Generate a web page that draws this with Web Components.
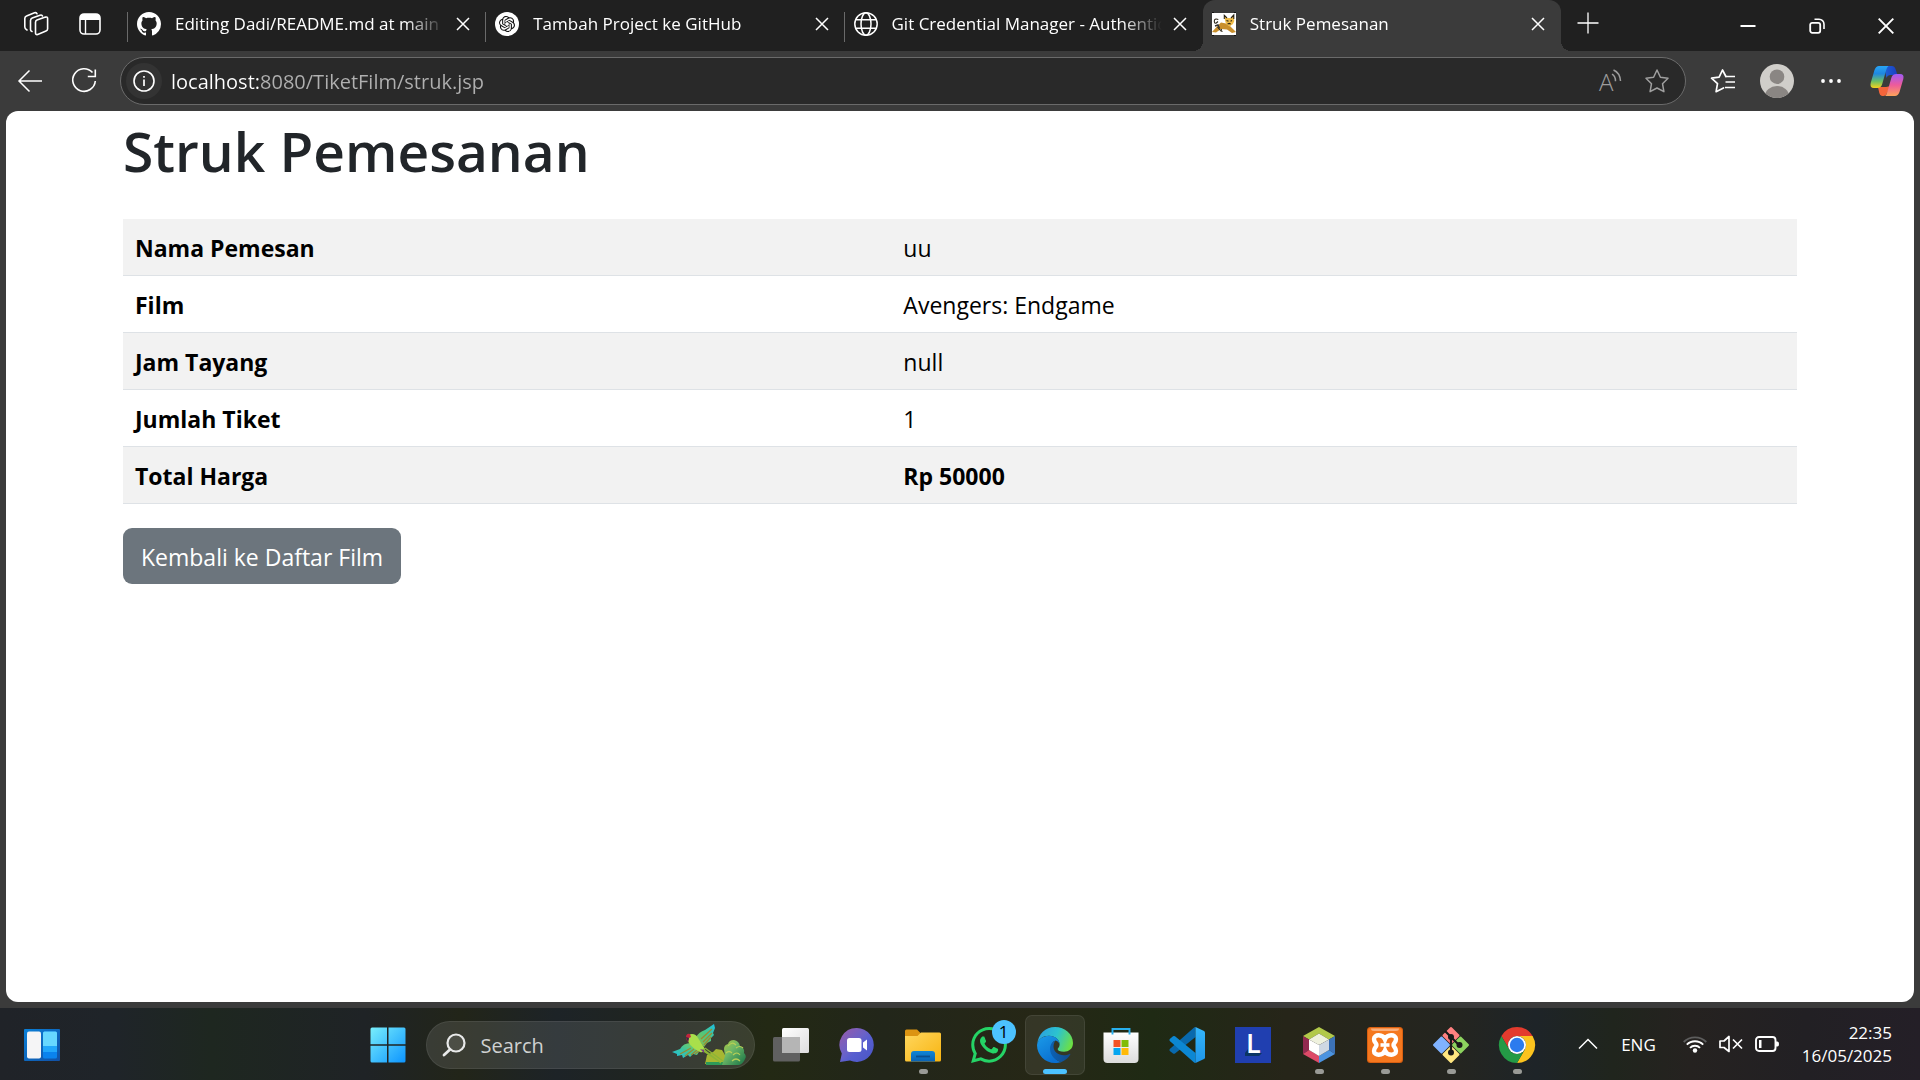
<!DOCTYPE html>
<html lang="id">
<head>
<meta charset="utf-8">
<title>Struk Pemesanan</title>
<style>
  html, body { margin: 0; height: 100%; }
  body { font-family: "Open Sans", "Noto Sans", sans-serif; background: #3b3b3b; overflow: hidden; }
</style>
</head>
<body>
<desktop-screen>
  <tab-strip slot="window">
    <browser-tab icon="github">Editing Dadi/README.md at main</browser-tab>
    <browser-tab icon="openai">Tambah Project ke GitHub</browser-tab>
    <browser-tab icon="globe">Git Credential Manager - Authentication</browser-tab>
    <browser-tab icon="tomcat" active>Struk Pemesanan</browser-tab>
  </tab-strip>
  <address-bar slot="window"></address-bar>
  <receipt-page slot="window"></receipt-page>
  <task-bar slot="taskbar"></task-bar>
</desktop-screen>

<script>
const ICONS = {
  workspaces: [26, 26, `<g fill="none" stroke="#fff" stroke-width="1.6" stroke-linejoin="round" stroke-linecap="round"><path d="M12.5 11.2Q12.6 9.5 14 9l8.500-2.900Q24.600 5.600 24.600 7.500v10.500Q24.500 19.500 23 20l-8.300 3.500Q12.500 24 12.500 22Z"/><path d="M9 20.500Q7.500 20 7.500 18.500V9.500Q7.600 7.700 9.200 7.100L17 4.200Q19 3.600 19.500 5"/><path d="M4 19Q1.800 17.800 1.800 16V7.500Q1.800 5.500 3.500 4.900L11.500 1.800Q13.500 1.300 14 2.800"/></g>`],
  sidebar: [22, 22, `<rect x="1" y="1" width="20" height="20" rx="4" fill="none" stroke="#fff" stroke-width="1.600"/><path d="M1 7V5a4 4 0 0 1 4-4h12a4 4 0 0 1 4 4v2z" fill="#fff"/><path d="M6.500 6v15" stroke="#fff" stroke-width="1.400"/>`],
  github: [16, 16, `<path fill="#fff" d="M8 0C3.58 0 0 3.58 0 8c0 3.540 2.290 6.530 5.470 7.590.4.07.55-.17.55-.38 0-.19-.01-.82-.01-1.490-2.010.37-2.530-.49-2.690-.94-.09-.23-.48-.94-.82-1.130-.28-.15-.68-.52-.01-.53.63-.01 1.080.58 1.230.82.72 1.210 1.870.87 2.330.66.07-.52.28-.87.51-1.070-1.780-.2-3.640-.89-3.640-3.950 0-.87.31-1.590.82-2.150-.08-.2-.36-1.020.08-2.120 0 0 .67-.21 2.200.82.64-.18 1.320-.27 2-.27s1.360.09 2 .27c1.530-1.040 2.200-.82 2.200-.82.44 1.100.16 1.920.08 2.120.51.56.82 1.270.82 2.150 0 3.070-1.870 3.750-3.650 3.950.29.25.54.73.54 1.480 0 1.070-.01 1.930-.01 2.200 0 .21.15.46.55.38A8.010 8.010 0 0016 8c0-4.420-3.580-8-8-8z"/>`],
  openai: [24, 24, `<circle cx="12" cy="12" r="12" fill="#fff"/><path transform="translate(4 4) scale(.667)" fill="#111" d="M22.2819 9.8211a5.9847 5.9847 0 0 0-.5157-4.9108 6.0462 6.0462 0 0 0-6.5098-2.9A6.0651 6.0651 0 0 0 4.9807 4.1818a5.9847 5.9847 0 0 0-3.9977 2.9 6.0462 6.0462 0 0 0 .7427 7.0966 5.98 5.98 0 0 0 .511 4.9107 6.051 6.051 0 0 0 6.5146 2.9001A5.9847 5.9847 0 0 0 13.2599 24a6.0557 6.0557 0 0 0 5.7718-4.2058 5.9894 5.9894 0 0 0 3.9977-2.9001 6.0557 6.0557 0 0 0-.7475-7.0729zm-9.022 12.6081a4.4755 4.4755 0 0 1-2.8764-1.0408l.1419-.0804 4.7783-2.7582a.7948.7948 0 0 0 .3927-.6813v-6.7369l2.02 1.1686a.071.071 0 0 1 .038.052v5.5826a4.504 4.504 0 0 1-4.4945 4.4944zm-9.6607-4.1254a4.4708 4.4708 0 0 1-.5346-3.0137l.142.0852 4.783 2.7582a.7712.7712 0 0 0 .7806 0l5.8428-3.3685v2.3324a.0804.0804 0 0 1-.0332.0615L9.74 19.9502a4.4992 4.4992 0 0 1-6.1408-1.6464zM2.3408 7.8956a4.485 4.485 0 0 1 2.3655-1.9728V11.6a.7664.7664 0 0 0 .3879.6765l5.8144 3.3543-2.0201 1.1685a.0757.0757 0 0 1-.071 0l-4.8303-2.7865A4.504 4.504 0 0 1 2.3408 7.8956zm16.5963 3.8558L13.1038 8.364 15.1192 7.2a.0757.0757 0 0 1 .071 0l4.8303 2.7913a4.4944 4.4944 0 0 1-.6765 8.1042v-5.6772a.79.79 0 0 0-.407-.667zm2.0107-3.0231l-.142-.0852-4.7735-2.7818a.7759.7759 0 0 0-.7854 0L9.409 9.2297V6.8974a.0662.0662 0 0 1 .0284-.0615l4.8303-2.7866a4.4992 4.4992 0 0 1 6.6802 4.66zM8.3065 12.863l-2.02-1.1638a.0804.0804 0 0 1-.038-.0567V6.0742a4.4992 4.4992 0 0 1 7.3757-3.4537l-.142.0805L8.704 5.459a.7948.7948 0 0 0-.3927.6813zm1.0976-2.3654l2.602-1.4998 2.6069 1.4998v2.9994l-2.5974 1.4997-2.6067-1.4997Z"/>`],
  globe: [24, 24, `<g fill="none" stroke="#fff" stroke-width="1.500"><circle cx="12" cy="12" r="11.200"/><ellipse cx="12" cy="12" rx="5" ry="11.200"/><path d="M1.800 7.800h20.400M1.800 16.200h20.400"/></g>`],
  tomcat: [24, 24, `<path fill="#fff" d="M0 1h24v22H0z"/><path d="M0 .5h2M22 .5h2M0 23.500h2M22 23.500h2" stroke="#111"/><path d="M0 20L5 14.500 9 10.500 14 11.500 18 14 24 20 20 21 15 17.500 9 17 4 20.500Z" fill="#c98f2c"/><path d="M12.500 4.500L15 6h4l2.700-2.500.6 5.500-1.300 3-3.500 2.500-3.500-2.500-1-3.500Z" fill="#f0bd4a"/><path d="M12.300 7V3.300L15 6M19 6l2.800-3v4M14.500 8.500l2 .8M20 8.500l-1.500.8M15.500 12l1.700-.6 1.600.6M6 9.500Q2.500 13 2.300 9.500T6.300 7.500M5.500 15l3 3.500M9.500 17l-.5 2 1.500.5" stroke="#2b2517" stroke-width="1.100" fill="none"/><path d="M3 14l3-1 1.500 3.500" stroke="#333" stroke-width="1.500" fill="none"/>`],
  close: [14, 14, `<path d="M1 1l12 12M13 1L1 13" stroke="#fff" stroke-width="1.500"/>`],
  plus: [22, 22, `<path d="M11 .5v21M.5 11h21" stroke="#fff" stroke-width="1.300"/>`],
  minimize: [16, 16, `<path d="M.5 8h15" stroke="#fff" stroke-width="2"/>`],
  restore: [16, 16, `<rect x="1.200" y="4.800" width="10" height="10" rx="2" fill="none" stroke="#fff" stroke-width="1.800"/><path d="M5.500 1.200h4.500a5 5 0 0 1 5 5v4.800" fill="none" stroke="#fff" stroke-width="1.600"/>`],
  quit: [16, 16, `<path d="M.7 .7l14.600 14.600M15.300 .7L.7 15.300" stroke="#fff" stroke-width="1.900"/>`],
  back: [26, 24, `<path d="M12.500 1.500L2 12l10.500 10.500M2 12h23" fill="none" stroke="#fff" stroke-width="1.500"/>`],
  reload: [26, 26, `<path d="M21.500 4.500A11.300 11.300 0 1 0 24.300 13M24.300 1.500v7h-7.500" fill="none" stroke="#fff" stroke-width="1.600"/>`],
  info: [22, 22, `<circle cx="11" cy="11" r="10" fill="none" stroke="#fff" stroke-width="1.600"/><path d="M11 9.500v6.500M11 6v1.700" stroke="#fff" stroke-width="1.700"/>`],
  read: [24, 24, `<text x="0" y="22" font-family="Open Sans, sans-serif" font-weight="300" font-size="24" fill="#9d9d9d">A</text><path d="M13 5.200q3.500 1.800 3.500 7M14.500 1q6.500 2.800 7 11" fill="none" stroke="#9d9d9d" stroke-width="1.500"/>`],
  star: [26, 26, `<path d="M13 2l3.400 7.200 7.600 1-5.500 5.500 1.400 8L13 20l-6.900 3.700 1.400-8L2 10.200l7.600-1z" fill="none" stroke="#a0a0a0" stroke-width="1.500" stroke-linejoin="round"/>`],
  favorites: [26, 26, `<path d="M13.500 20L6.100 23.700l1.400-8L1.500 10.200l7.600-1L12.500 2l3.400 6.500" fill="none" stroke="#fff" stroke-width="1.700" stroke-linejoin="round" stroke-linecap="round"/><path d="M15.500 8.500H25M15.500 14H25M15 19.500H25" stroke="#fff" stroke-width="1.700"/>`],
  avatar: [34, 34, `<clipPath id="a"><circle cx="17" cy="17" r="17"/></clipPath><circle cx="17" cy="17" r="17" fill="#d0ceca"/><g clip-path="url(#a)" fill="#8a8683"><circle cx="17" cy="12.700" r="7.300"/><ellipse cx="17" cy="32" rx="12" ry="10"/></g>`],
  more: [22, 22, `<g fill="#fff"><circle cx="3" cy="11" r="1.900"/><circle cx="11" cy="11" r="1.900"/><circle cx="19" cy="11" r="1.900"/></g>`],
  copilot: [34, 32, `<defs><linearGradient id="a" x1="0" y1="0" x2="0" y2="1"><stop offset="0" stop-color="#28a5f5"/><stop offset=".35" stop-color="#1f87e0"/><stop offset=".7" stop-color="#6fbf63"/><stop offset="1" stop-color="#f6d21c"/></linearGradient><linearGradient id="b" x1="0" y1="0" x2="0" y2="1"><stop offset="0" stop-color="#a05af5"/><stop offset=".5" stop-color="#ee5b9b"/><stop offset="1" stop-color="#fda35a"/></linearGradient><linearGradient id="c"><stop offset="0" stop-color="#1f62d8"/><stop offset="1" stop-color="#1a3fc0"/></linearGradient></defs><path d="M14 1h8q2.500 0 3.500 3l2 6h-7q-3 0-4 3z" fill="url(#c)"/><path d="M8 22h8l5-1-4 7q-1 3-3 3h-2q-2 0-2.700-3Z" fill="#f4643a"/><path d="M9 1h9.500q-1.500 1-2.300 4l-4 14q-1 4-5 4H4Q-.5 23 .7 18L4.500 5Q6 1 9 1Z" fill="url(#a)"/><path d="M25 31h-10q1.500-1 2.300-4l4-14q1-4 5-4H30q4.500 0 3.300 5L29.500 27Q28 31 25 31Z" fill="url(#b)"/>`],
  widgets: [36, 32, `<defs><linearGradient id="a" x2="1" y2="1"><stop stop-color="#0a80d8"/><stop offset="1" stop-color="#1150a5"/></linearGradient></defs><rect width="36" height="32" rx="1" fill="url(#a)"/><rect x="3" y="2.500" width="14" height="27" rx="2" fill="#f5f5f6"/><rect x="19" y="2.500" width="14" height="27" rx="1.500" fill="#0a83ee"/><path d="M19 17h14v6H19z" fill="#21a7fb"/><path d="M19 4q0-1.500 1.500-1.500h11Q33 2.500 33 4v13H19z" fill="#67d8ff"/>`],
  start: [36, 36, `<defs><linearGradient id="a" gradientUnits="userSpaceOnUse" x2="36" y2="36"><stop stop-color="#7af0fc"/><stop offset="1" stop-color="#0b93ff"/></linearGradient></defs><path fill="url(#a)" d="M2 .5h15v16.700H.5V2Q.5.5 2 .5zM18.500.5h15.500q1.500 0 1.500 1.500v15.200h-17zM.5 18.700H17v16.800H2q-1.500 0-1.500-1.500zM18.500 18.700h17V34q0 1.500-1.500 1.500H18.500z"/>`],
  search: [24, 24, `<circle cx="14" cy="10" r="8.500" fill="#ffffff18" stroke="#e8e9e9" stroke-width="2.200"/><path d="M8 16.500L2 22" stroke="#e8e9e9" stroke-width="2.800" stroke-linecap="round"/>`],
  parrot: [78, 42, `<defs><linearGradient id="a" x1="0" y1="0" x2="1" y2="1"><stop stop-color="#b3c93c"/><stop offset=".4" stop-color="#6fb867"/><stop offset="1" stop-color="#167246"/></linearGradient><linearGradient id="b" x1="1" y1="0" x2="0" y2="1"><stop stop-color="#19c0e8"/><stop offset=".5" stop-color="#4fc77c"/><stop offset="1" stop-color="#9ab944"/></linearGradient><linearGradient id="c" x1="0" y1="1" x2="1" y2="0"><stop stop-color="#19c0e8"/><stop offset=".5" stop-color="#3fc49a"/><stop offset="1" stop-color="#8fd24a"/></linearGradient></defs><path d="M33 40l2-9 6-3 3-3 6 1 3 5 4 9z" fill="#a6b732"/><path d="M34 38h18v3H34z" fill="#2e9a59"/><path d="M50 41l3-9-1-7q0-4 4-5 1-4 6-4 5 1 6 6 5 2 4 7 3 3 1 6-2 5-6 6z" fill="url(#a)"/><path d="M56 22q4-5 8-1M61 31q4-4 7 0M54 29q3-3 6 0M64 24q4-3 7 0M60 37q4-4 8 0" stroke="#b7cf57" stroke-width="1.200" fill="none"/><path d="M24 13Q27 8 33 6L42 0 43 4 41 9 42 11 39 14 39 17 35 19 32 23Z" fill="url(#b)"/><path d="M29 15l11-10M31 18l9-9M32 21l7-8" stroke="#9a8a32" stroke-width="1.300"/><path d="M19 19Q11 19 8 25L0 28 5 30 5 32 10 31 11 34 16 31 18 33 21 30 25 31 28 26Z" fill="url(#c)"/><path d="M19 24L8 30M22 25L13 32M25 26L19 31M27 27L23 30" stroke="#9a8a32" stroke-width="1.200"/><path d="M15 15q1-5 5-5 4 0 6 4l7 11q-1 4-5 3-8-4-11-9z" fill="#a9df4b"/><path d="M14 12q1-3 4-2l1 3-2 1-1 4q-2-2-2-6z" fill="#c1263d"/><path d="M14 13l3 1-1 4z" fill="#372a4b"/><path d="M31 25l18 14M33 24l18 13M30 26l15 10" stroke="#8cb538" stroke-width="1.300"/><path d="M28 25l4 1v3z" fill="#7a3f86"/>`],
  taskview: [36, 36, `<defs><linearGradient id="a" x2="1" y2="1"><stop stop-color="#fff"/><stop offset="1" stop-color="#dedede"/></linearGradient></defs><rect x="0" y="10" width="27" height="24.500" rx="1.500" fill="#606060"/><rect x="9" y="1" width="27" height="25" rx="1.500" fill="url(#a)"/><path d="M9 10h18v16H9z" fill="#b5b5b5"/>`],
  chat: [36, 36, `<defs><linearGradient id="a" x2="1" y2="1"><stop stop-color="#9a5aa8"/><stop offset=".45" stop-color="#6a62c8"/><stop offset=".6" stop-color="#565ed0"/><stop offset="1" stop-color="#4a55c4"/></linearGradient></defs><path d="M18 1a17 17 0 1 1-7 32.600L1 35l1.800-8.500A17 17 0 0 1 18 1z" fill="url(#a)"/><rect x="8" y="11" width="14.500" height="14" rx="2.500" fill="#fff"/><path d="M24 15.500l4-3v11l-4-3z" fill="#fff"/>`],
  folder: [36, 36, `<defs><linearGradient id="a" x2="1" y2="1"><stop stop-color="#ffd75e"/><stop offset="1" stop-color="#f8b411"/></linearGradient><linearGradient id="b" x2="0" y2="1"><stop stop-color="#1186d6"/><stop offset="1" stop-color="#0a62b4"/></linearGradient></defs><path d="M0 4q0-1.500 1.500-1.500h10.500l4 4-3 4H0z" fill="#dc9412"/><path d="M0 9h12.500l3.500-3.500h18.500q1.500 0 1.500 1.500v26q0 1.500-1.500 1.500h-33q-1.500 0-1.500-1.500z" fill="url(#a)"/><path d="M6 34.500v-7.500q0-3 3-3h18q3 0 3 3v7.500z" fill="url(#b)"/><path d="M11 29.500h14" stroke="#0b4f8e" stroke-width="1.800"/>`],
  whatsapp: [24, 24, `<path fill="#25d366" d="M17.472 14.382c-.297-.149-1.758-.867-2.030-.967-.273-.099-.471-.148-.67.15-.197.297-.767.966-.94 1.164-.173.199-.347.223-.644.075-.297-.15-1.255-.463-2.390-1.475-.883-.788-1.480-1.761-1.653-2.059-.173-.297-.018-.458.13-.606.134-.133.298-.347.446-.52.149-.174.198-.298.298-.497.099-.198.05-.371-.025-.52-.075-.149-.669-1.612-.916-2.207-.242-.579-.487-.5-.669-.51-.173-.008-.371-.01-.57-.01-.198 0-.52.074-.792.372-.272.297-1.040 1.016-1.040 2.479 0 1.462 1.065 2.875 1.213 3.074.149.198 2.096 3.200 5.077 4.487.709.306 1.262.489 1.694.625.712.227 1.360.195 1.871.118.571-.085 1.758-.719 2.006-1.413.248-.694.248-1.289.173-1.413-.074-.124-.272-.198-.57-.347m-5.421 7.403h-.004a9.870 9.870 0 01-5.031-1.378l-.361-.214-3.741.982.998-3.648-.235-.374a9.860 9.860 0 01-1.510-5.260c.001-5.450 4.436-9.884 9.888-9.884 2.640 0 5.122 1.030 6.988 2.898a9.825 9.825 0 012.893 6.994c-.003 5.450-4.437 9.884-9.885 9.884m8.413-18.297A11.815 11.815 0 0012.050 0C5.495 0 .16 5.335.157 11.892c0 2.096.547 4.142 1.588 5.945L.057 24l6.305-1.654a11.882 11.882 0 005.683 1.448h.005c6.554 0 11.890-5.335 11.893-11.893a11.821 11.821 0 00-3.480-8.413Z"/>`],
  edge: [36, 36, `<defs><linearGradient id="a" x1="0" y1=".3" x2="1" y2=".6"><stop stop-color="#2a9fe0"/><stop offset=".5" stop-color="#2cc3cf"/><stop offset="1" stop-color="#6de043"/></linearGradient><linearGradient id="b" x2=".6" y2="1"><stop stop-color="#1a9ae8"/><stop offset="1" stop-color="#0a6fd0"/></linearGradient><linearGradient id="c" x2="1" y2="0"><stop stop-color="#0c62b4"/><stop offset="1" stop-color="#114a8b"/></linearGradient></defs><path d="M.3 17C1 7 8.500 0 18 0c10 0 18 7 18 16 0 6-4.500 8.700-9 8.700-4 0-6.300-1.200-6.300-2.500 0-.8 1.900-1.700 1.900-4.900 0-4.800-4.600-8.500-10.600-8.500S1.600 12 .3 17z" fill="url(#a)"/><path d="M0 18C.8 12.500 6 8.800 12 8.800c6 0 10.600 3.700 10.600 8.500-.5-2-2.300-3.300-4.100-3.800-3 1-4.700 4-4.700 7.500 0 7 5.200 13 10.700 14-2 .7-4.500 1-6.500 1C8 36 0 28 0 18z" fill="url(#b)"/><path d="M18.500 13.500c-3.500 1.500-5.500 4.500-5.500 8 0 7.500 6 12.500 11.500 13.500 4-1.500 7.300-4.500 8.800-7.500.3-.7-.3-.9-.8-.6-1.500.8-3.500 1.300-5.500 1.300-6 0-10.500-3.700-10.500-8.700 0-2.500.9-4.700 2-6z" fill="url(#c)"/>`],
  store: [36, 36, `<defs><linearGradient id="a" x2="0" y2="1"><stop stop-color="#fff"/><stop offset="1" stop-color="#dcdcdc"/></linearGradient></defs><path d="M.5 5.500h35V32q0 4-4 4h-27q-4 0-4-4z" fill="url(#a)"/><path d="M9.500 7.500V2h17v5.500" fill="none" stroke="#28b0ee" stroke-width="1.900"/><path d="M10.500 13h7v7h-7z" fill="#f35325"/><path d="M18.500 13h7v7h-7z" fill="#81bc06"/><path d="M10.500 21h7v7h-7z" fill="#05a6f0"/><path d="M18.500 21h7v7h-7z" fill="#ffba08"/>`],
  vscode: [36, 36, `<defs><linearGradient id="a" x2="0" y2="1"><stop stop-color="#35b6fb"/><stop offset="1" stop-color="#1e96ea"/></linearGradient></defs><path d="M26.500 0v10L6 26.500q-1 .7-2 0L.8 24q-.8-1 0-2L24.500 1q1-.9 2-1z" fill="#0969ad"/><path d="M26.500 36V26L6 9.300q-1-.7-2 0L.8 12q-.8 1 0 2l23.700 21q1 .9 2 1z" fill="#0c87d3"/><path d="M26.500 0l8.500 4q1 .5 1 1.600v24.800q0 1.100-1 1.600l-8.500 4z" fill="url(#a)"/>`],
  lightshot: [36, 36, `<path d="M0 0h36v36H0z" fill="#203fb0"/><path d="M10 26l3-4v-15v19h14v0l-3 3H10z" fill="#0b3564"/><text x="11" y="26" font-family="Open Sans, sans-serif" font-weight="600" font-size="27" fill="#fff">L</text>`],
  netbeans: [36, 36, `<path d="M18 0l16 9-6 3.400-10-5.900-10 5.900L2 9z" fill="#b2c94a"/><path d="M2 9l6 3.400V23l-6 4z" fill="#922a50"/><path d="M2 27l6-4 10 6v7z" fill="#dd4a68"/><path d="M34 9l-6 3.400V23l6 4z" fill="#3c72b8"/><path d="M34 27l-6-4-10 6v7z" fill="#4b93e0"/><path d="M18 6.500l10 5.900-10 5.600-10-5.600z" fill="#eff2de"/><path d="M8 12.400L18 18v11L8 23z" fill="#fff"/><path d="M28 12.400L18 18v11l10-6z" fill="#cfd8e3"/>`],
  xampp: [36, 36, `<rect width="36" height="36" rx="3.500" fill="#d95f10"/><rect x="1" y="1" width="34" height="34" rx="3" fill="#f5781f"/><path d="M4 1.500h28q0 2.500-3 2.500H7q-3 0-3-2.500z" fill="#f9ae7c"/><path d="M18 12.500C16 7 7 7 7 12c0 3.500 2.500 4 2.500 6S7 20.500 7 24c0 5 9 5 11-.5 2 5.500 11 5.500 11 .5 0-3.500-2.500-4-2.500-6s2.500-2.500 2.500-6c0-5-9-5-11 .5z" fill="none" stroke="#fff" stroke-width="4.400"/><path d="M13.500 18h9" stroke="#fff" stroke-width="3.600"/>`],
  git: [36, 36, `<g stroke-linejoin="round" stroke-width="2"><path d="M18 1l7.500 7.500L18 16l-7.500-7.500z" fill="#ff8080" stroke="#ff8080"/><path d="M8.500 10.500L16 18l-7.500 7.500L1 18z" fill="#80b3ff" stroke="#80b3ff"/><path d="M27.500 10.500L35 18l-7.500 7.500L20 18z" fill="#8dd35f" stroke="#8dd35f"/><path d="M18 20l7.500 7.500L18 35l-7.500-7.500z" fill="#ffe680" stroke="#ffe680"/></g><path d="M12 4l6 6v16M18 10l8.500 8.500" stroke="#1a1a1a" stroke-width="2.200" fill="none"/><g fill="#1a1a1a"><circle cx="18" cy="10" r="3"/><circle cx="18" cy="25.500" r="3"/><circle cx="26.500" cy="18" r="3"/></g>`],
  chrome: [36, 36, `<path d="M18 9h15.600A18 18 0 0 0 2.400 9l7.800 13.500A9 9 0 0 1 18 9z" fill="#e33b2e"/><path d="M33.600 9H18a9 9 0 0 1 7.800 13.500L18 36A18 18 0 0 0 33.600 9z" fill="#fcc31e"/><path d="M2.400 9A18 18 0 0 0 18 36l7.800-13.500a9 9 0 0 1-15.600 0z" fill="#249a46"/><circle cx="18" cy="18" r="9" fill="#fff"/><circle cx="18" cy="18" r="7.200" fill="#2c7bee"/>`],
  chevron: [20, 12, `<path d="M1 10.500L10 1.500l9 9" fill="none" stroke="#fff" stroke-width="1.500"/>`],
  wifi: [24, 18, `<g fill="none" stroke-width="1.900"><path d="M.7 7A16 16 0 0 1 23.300 7" stroke="#5d5d5d"/><path d="M3.800 9.700a11.600 11.600 0 0 1 16.400 0M7 12.800a7 7 0 0 1 10 0" stroke="#fff"/></g><circle cx="12" cy="15.500" r="2.200" fill="#fff"/>`],
  mute: [24, 18, `<path d="M1 6h4l5-4.500v15L5 12.500H1z" fill="none" stroke="#fff" stroke-width="1.700" stroke-linejoin="round"/><path d="M14 4.500l9 9M23 4.500l-9 9" stroke="#fff" stroke-width="1.700"/>`],
  battery: [24, 18, `<rect x="1" y="2" width="19.500" height="14" rx="3" fill="none" stroke="#fff" stroke-width="1.900"/><path d="M4 5h2.500v8H4z" fill="#fff"/><path d="M21 6.500h1.500q1.500 0 1.500 2.500t-1.500 2.500H21z" fill="#fff"/>`]
};

const define = (name, markup, setup) => {
  const template = document.createElement('template');
  template.innerHTML = markup;
  customElements.define(name, class extends HTMLElement {
    connectedCallback() {
      if (this.shadowRoot) return;
      const root = this.attachShadow({ mode: 'open' });
      root.append(template.content.cloneNode(true));
      if (setup) setup(this, root);
    }
  });
};

const RESET = `
  :host, * { box-sizing: border-box; }
  button, input { font: inherit; color: inherit; border: 0; background: none; padding: 0; margin: 0; outline: 0; }
  button { display: flex; align-items: center; justify-content: center; cursor: pointer; }
`;

/* <ui-icon name size>: one drawing from ICONS; size is the drawn width */
define('ui-icon', `<style>:host { display: block; flex: none; } svg { display: block; overflow: visible; }</style>`, (host, root) => {
  const [w, h, body] = ICONS[host.getAttribute('name')];
  const width = Number(host.getAttribute('size')) || w;
  const holder = document.createElement('div');
  holder.innerHTML = `<svg aria-hidden="true" width="${width}" height="${width * h / w}" viewBox="0 0 ${w} ${h}" fill="none">${body}</svg>`;
  root.append(holder);
});

define('desktop-screen', `
  <style>
    :host { display: flex; flex-direction: column; height: 100vh; }
    .window { flex: 1; display: flex; flex-direction: column; min-height: 0; background: #3b3b3b; }
  </style>
  <div class="window"><slot name="window"></slot></div>
  <slot name="taskbar"></slot>
`);

define('tab-strip', `
  <style>${RESET}
    :host { display: flex; flex: none; height: 51px; background: #202020; }
    .actions { display: flex; align-items: center; flex: none; width: 128px; padding: 0 0 3px 9px; }
    .actions button { width: 54px; height: 40px; }
    .tabs { display: flex; flex: 0 1 1433px; min-width: 0; }
    .new { width: 54px; height: 46px; flex: none; }
    .controls { display: flex; margin-left: auto; }
    .controls button { width: 69px; height: 51px; }
  </style>
  <div class="actions">
    <button aria-label="Workspaces"><ui-icon name="workspaces"></ui-icon></button>
    <button aria-label="Tab actions"><ui-icon name="sidebar"></ui-icon></button>
  </div>
  <div class="tabs"><slot></slot></div>
  <button class="new" aria-label="New tab"><ui-icon name="plus"></ui-icon></button>
  <div class="controls">
    <button aria-label="Minimize"><ui-icon name="minimize"></ui-icon></button>
    <button aria-label="Restore"><ui-icon name="restore"></ui-icon></button>
    <button aria-label="Close"><ui-icon name="quit"></ui-icon></button>
  </div>
`);

define('browser-tab', `
  <style>${RESET}
    :host { position: relative; display: flex; align-items: center; flex: 1 1 0; min-width: 0; color: #fff; font-size: 17px; line-height: 24px; padding: 0 11px 3px 9px; }
    :host::before { content: ""; position: absolute; left: -1px; top: 12px; width: 1px; height: 30px; background: #6a6a6a; }
    :host([active]) { background: #3b3b3b; border-radius: 12px 12px 0 0; }
    :host([active])::before, :host([active])::after { content: ""; position: absolute; top: auto; bottom: 0; width: 10px; height: 10px; }
    :host([active])::before { left: -10px; background: radial-gradient(circle at 0 0, #202020 10px, #3b3b3b 10px); }
    :host([active])::after { right: -10px; background: radial-gradient(circle at 100% 0, #202020 10px, #3b3b3b 10px); }
    .title { justify-content: flex-start; flex: 1; min-width: 0; gap: 14px; }
    .label { flex: 1; min-width: 0; text-align: left; white-space: nowrap; overflow: hidden; -webkit-mask-image: linear-gradient(to left, transparent, #000 40px); mask-image: linear-gradient(to left, transparent, #000 40px); }
    .close { width: 24px; height: 24px; margin-left: 6px; flex: none; }
  </style>
  <button class="title"><span class="icon"></span><span class="label"><slot></slot></span></button>
  <button class="close" aria-label="Close tab"><ui-icon name="close"></ui-icon></button>
`, (host, root) => {
  root.querySelector('.icon').innerHTML = `<ui-icon name="${host.getAttribute('icon')}" size="24"></ui-icon>`;
});

define('address-bar', `
  <style>${RESET}
    :host { display: flex; align-items: center; flex: none; height: 60px; padding: 0 6px 0 3px; color: #fff; }
    .nav { width: 54px; height: 48px; flex: none; }
    .box { flex: 1; display: flex; align-items: center; height: 48px; margin: 0 10px 0 9px; padding: 0 5px; border: 1px solid #6a6a6a; border-radius: 24px; background: #292929; }
    .info { width: 36px; height: 36px; border-radius: 50%; background: #333; flex: none; }
    input { flex: 1; min-width: 0; margin-left: 9px; height: 40px; font-size: 20px; color: #b0b0b0; -webkit-text-fill-color: transparent; background: linear-gradient(to right, #fff 88px, #b0b0b0 88px); -webkit-background-clip: text; background-clip: text; }
    .small { width: 46px; height: 40px; flex: none; }
    .copilot { margin-left: 2px; }
  </style>
  <button class="nav" aria-label="Back"><ui-icon name="back"></ui-icon></button>
  <button class="nav" aria-label="Refresh"><ui-icon name="reload"></ui-icon></button>
  <div class="box">
    <button class="info" aria-label="Site information"><ui-icon name="info"></ui-icon></button>
    <input type="text" aria-label="Address" value="localhost:8080/TiketFilm/struk.jsp" spellcheck="false">
    <button class="small" aria-label="Read aloud"><ui-icon name="read"></ui-icon></button>
    <button class="small" aria-label="Add to favorites"><ui-icon name="star"></ui-icon></button>
  </div>
  <button class="nav" aria-label="Favorites"><ui-icon name="favorites"></ui-icon></button>
  <button class="nav" aria-label="Profile"><ui-icon name="avatar"></ui-icon></button>
  <button class="nav" aria-label="More"><ui-icon name="more"></ui-icon></button>
  <button class="nav copilot" aria-label="Copilot"><ui-icon name="copilot"></ui-icon></button>
`);

define('receipt-page', `
  <style>${RESET}
    :host { display: block; flex: 1; min-height: 0; margin: 0 6px 6px; border-radius: 12px; background: #fff; color: #212529; overflow: hidden; }
    main { max-width: 1674px; margin: 0 auto; font-size: 23px; line-height: 32px; }
    h1 { margin: 0 0 32px; padding-top: 4px; font-size: 55px; line-height: 72px; font-weight: 600; }
    table { width: 100%; border-collapse: collapse; color: #000; margin-bottom: 24px; }
    th, td { text-align: left; padding: 13px 12px 11px; border-bottom: 1px solid #dee2e6; }
    th { width: 45.9%; font-weight: 700; }
    tr:nth-child(odd) > * { background: #f2f2f2; }
    a { display: inline-block; padding: 13px 18px 11px; border-radius: 9px; background: #6c757d; color: #fff; text-decoration: none; }
  </style>
  <main>
    <h1>Struk Pemesanan</h1>
    <table>
      <tbody>
        <tr><th scope="row">Nama Pemesan</th><td>uu</td></tr>
        <tr><th scope="row">Film</th><td>Avengers: Endgame</td></tr>
        <tr><th scope="row">Jam Tayang</th><td>null</td></tr>
        <tr><th scope="row">Jumlah Tiket</th><td>1</td></tr>
        <tr><th scope="row">Total Harga</th><td><strong>Rp 50000</strong></td></tr>
      </tbody>
    </table>
    <a href="#">Kembali ke Daftar Film</a>
  </main>
`);

define('task-item', `
  <style>${RESET}
    :host { display: block; flex: none; }
    button { position: relative; width: 60px; height: 60px; border-radius: 7px; border: 1px solid transparent; }
    :host([active]) button { background: #ffffff12; border-color: #ffffff14; }
    .mark { position: absolute; bottom: 0; left: 50%; width: 9px; height: 5px; margin-left: -4px; border-radius: 3px; background: #999a96; }
    :host([active]) .mark { width: 24px; margin-left: -12px; background: #4cc2ff; }
    :host(:not([open]):not([active])) .mark { display: none; }
    .badge { position: absolute; top: 4px; right: 2px; width: 24px; height: 24px; border-radius: 50%; background: #4cc2ff; color: #000; font-size: 17px; line-height: 24px; }
    .badge:empty { display: none; }
  </style>
  <button><span class="icon"></span><span class="badge"></span><span class="mark"></span></button>
`, (host, root) => {
  root.querySelector('.icon').innerHTML = `<ui-icon name="${host.getAttribute('icon')}" size="36"></ui-icon>`;
  root.querySelector('.badge').textContent = host.getAttribute('badge') || '';
  root.querySelector('button').setAttribute('aria-label', host.getAttribute('label'));
});

define('task-bar', `
  <style>${RESET}
    :host { display: flex; flex: none; height: 72px; padding: 7px 14px 5px 0; color: #fff;
      background: linear-gradient(90deg, #202328 0%, #1f2429 6%, #1e2720 11%, #1f2326 19%, #222519 24%, #1d2327 29%, #20251e 35%, #232914 40%, #22261a 46%, #262716 54%, #1f2a14 60%, #262519 67%, #242520 76%, #1e2428 80%, #20251d 84%, #252220 88%, #222024 94%, #241f27 100%); }
    .left, .right { flex: 1 1 0; display: flex; align-items: center; }
    .left { padding-left: 12px; }
    .center { display: flex; align-items: center; gap: 6px; }
    .search { display: flex; align-items: center; width: 329px; height: 48px; margin-left: 2px; padding: 0 4px 0 15px; border: 1px solid #ffffff12; border-radius: 24px; background: #ffffff1c; }
    .search input { flex: 1; min-width: 0; margin-left: 15px; font-size: 20px; height: 36px; }
    .search input::placeholder { color: #cfd1d1; opacity: 1; }
    .right { justify-content: flex-end; padding: 0 14px 2px 0; font-size: 17px; line-height: 23px; }
    .status { gap: 12px; margin: 0 23px 0 27px; }
    .lang { margin-left: 23px; }
    .clock { display: block; text-align: right; }
    .clock span { display: block; }
  </style>
  <div class="left"><task-item icon="widgets" label="Widgets"></task-item></div>
  <div class="center">
    <task-item icon="start" label="Start"></task-item>
    <label class="search"><ui-icon name="search"></ui-icon><input type="text" aria-label="Search" placeholder="Search"><ui-icon name="parrot"></ui-icon></label>
    <task-item icon="taskview" label="Task view"></task-item>
    <task-item icon="chat" label="Chat"></task-item>
    <task-item icon="folder" label="File Explorer" open></task-item>
    <task-item icon="whatsapp" label="WhatsApp" badge="1"></task-item>
    <task-item icon="edge" label="Microsoft Edge" active></task-item>
    <task-item icon="store" label="Microsoft Store"></task-item>
    <task-item icon="vscode" label="Visual Studio Code"></task-item>
    <task-item icon="lightshot" label="L"></task-item>
    <task-item icon="netbeans" label="NetBeans" open></task-item>
    <task-item icon="xampp" label="XAMPP" open></task-item>
    <task-item icon="git" label="Git" open></task-item>
    <task-item icon="chrome" label="Chrome" open></task-item>
  </div>
  <div class="right">
    <button aria-label="Hidden icons"><ui-icon name="chevron"></ui-icon></button>
    <button class="lang">ENG</button>
    <button class="status" aria-label="Quick settings"><ui-icon name="wifi"></ui-icon><ui-icon name="mute"></ui-icon><ui-icon name="battery"></ui-icon></button>
    <button class="clock"><span>22:35</span><span>16/05/2025</span></button>
  </div>
`);
</script>
</body>
</html>
